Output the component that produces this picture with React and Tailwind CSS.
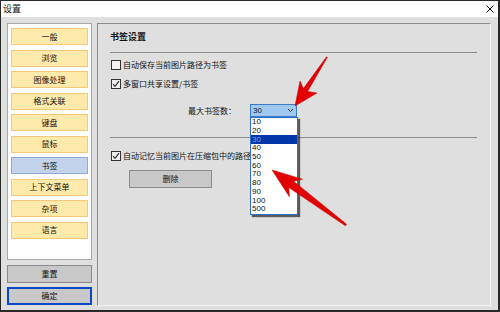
export default function App() {
  const items = ["一般", "浏览", "图像处理", "格式关联", "键盘", "鼠标", "书签", "上下文菜单", "杂项", "语言"];
  const nums = ["10", "20", "30", "40", "50", "60", "70", "80", "90", "100", "500"];
  const cjk = { fontFamily: '"Noto Sans CJK SC", "Noto Sans", sans-serif' };

  const Check = ({ checked }) => (
    <div className="w-[10px] h-[10px] border border-[#333] bg-[#f2f2f2] flex items-center justify-center">
      {checked && (
        <svg width="8" height="8" viewBox="0 0 8 8">
          <path d="M1 4 L3 6.3 L7 1.2" fill="none" stroke="#222" strokeWidth="1.1" />
        </svg>
      )}
    </div>
  );

  return (
    <div
      className="relative w-[500px] h-[312px] bg-[#dfdfdf] border-t border-l border-r-2 border-b-2 border-[#2a2a2a] flex flex-col overflow-hidden text-[#111]"
      style={cjk}
    >
      {/* title bar */}
      <div className="h-[16px] bg-white flex items-center justify-between pl-[2px] pr-[3px]">
        <span className="text-[9px] leading-[12px]">设置</span>
        <svg width="8" height="8" viewBox="0 0 8 8" className="mr-[1px]">
          <path d="M0.5 0.5 L7.5 7.5 M7.5 0.5 L0.5 7.5" stroke="#111" strokeWidth="1" />
        </svg>
      </div>

      {/* body */}
      <div className="flex flex-1 pt-[6px] pl-[6px] pr-[7px] pb-[4px] gap-[5px]">
        {/* left column */}
        <div className="w-[85px] flex flex-col">
          <div className="h-[237px] bg-white border border-[#a9a9a9] flex flex-col gap-[4.5px] pt-[4px] px-[3px]">
            {items.map((t) => {
              const sel = t === "书签";
              return (
                <div
                  key={t}
                  className={
                    "h-[17px] flex items-center justify-center text-[8px] leading-[10px] border " +
                    (sel ? "bg-[#c4d3ec] border-[#90a9d9]" : "bg-[#feeaaa] border-[#f7c77c]")
                  }
                >
                  {t}
                </div>
              );
            })}
          </div>
          <div className="mt-[5px] h-[18px] bg-[#c8c8c8] border border-[#8a8a8a] flex items-center justify-center text-[8px]">
            重置
          </div>
          <div className="mt-[4px] h-[18px] bg-[#c8c8c8] border-2 border-[#0b47c6] flex items-center justify-center text-[8px]">
            确定
          </div>
        </div>

        {/* right panel */}
        <div className="flex-1 border-t border-l border-[#8c8c8c] border-r border-b border-r-[#f6f6f6] border-b-[#f6f6f6] pl-[12px] pr-[13px] flex flex-col">
          <div className="mt-[7px] h-[12px] text-[9px] leading-[12px] font-bold">书签设置</div>
          <div className="mt-[9px] border-t border-[#8a8a8a]" />

          <div className="mt-[6px] h-[12px] flex items-center gap-[2px] text-[8px] pl-[1px]">
            <Check />
            <span>自动保存当前图片路径为书签</span>
          </div>
          <div className="mt-[7px] h-[12px] flex items-center gap-[2px] text-[8px] pl-[1px]">
            <Check checked />
            <span>多窗口共享设置/书签</span>
          </div>

          <div className="mt-[14px] h-[13px] flex items-center pl-[78px]">
            <span className="w-[62px] text-[8px] leading-[10px]">最大书签数：</span>
            <div className="w-[47px] h-[13px] bg-[#a0c9ef] border border-[#3a78c8] flex items-center justify-between pl-[2px] pr-[2px]">
              <span className="text-[8px] leading-[10px]" style={{ fontFamily: '"Liberation Sans", sans-serif' }}>30</span>
              <svg width="7" height="5" viewBox="0 0 7 5">
                <path d="M1 1 L3.5 3.5 L6 1" fill="none" stroke="#333" strokeWidth="1" />
              </svg>
            </div>
          </div>

          <div className="mt-[20px] border-t border-[#8a8a8a]" />

          <div className="mt-[12px] h-[12px] flex items-center gap-[2px] text-[8px] pl-[1px]">
            <Check checked />
            <span className="whitespace-nowrap">自动记忆当前图片在压缩包中的路径</span>
          </div>

          <div className="mt-[8px] ml-[19px] w-[83px] h-[18px] bg-[#c8c8c8] border border-[#8a8a8a] flex items-center justify-center text-[8px]">
            删除
          </div>
        </div>
      </div>

      {/* dropdown list */}
      <div
        className="absolute left-[249px] top-[116px] w-[48px] bg-white border border-[#2e6fd0] shadow-[2px_2px_1px_rgba(0,0,0,0.6)] flex flex-col"
        style={{ fontFamily: '"Liberation Sans", sans-serif' }}
      >
        {nums.map((n) => (
          <div
            key={n}
            className={
              "h-[8.7px] flex items-center pl-[1px] text-[8px] leading-[8px] " +
              (n === "30" ? "bg-[#0036a8] text-[#7fa4e4]" : "text-[#111]")
            }
          >
            {n}
          </div>
        ))}
      </div>

      {/* red callout arrows */}
      <svg className="absolute left-0 top-0 pointer-events-none" width="500" height="312" viewBox="0 0 500 312">
        <polygon
          points="294,105 299,80 302.4,87.6 325.6,55.7 326.4,56.3 306.6,90.4 316,92"
          fill="#e30000"
          stroke="#c00000"
          strokeWidth="0.5"
        />
        <polygon
          points="271,169 301.6,178.2 292.6,180.2 345.6,223.2 344.4,224.8 287.8,186.6 288.4,195.8"
          fill="#e30000"
          stroke="#c00000"
          strokeWidth="0.5"
        />
      </svg>
    </div>
  );
}
